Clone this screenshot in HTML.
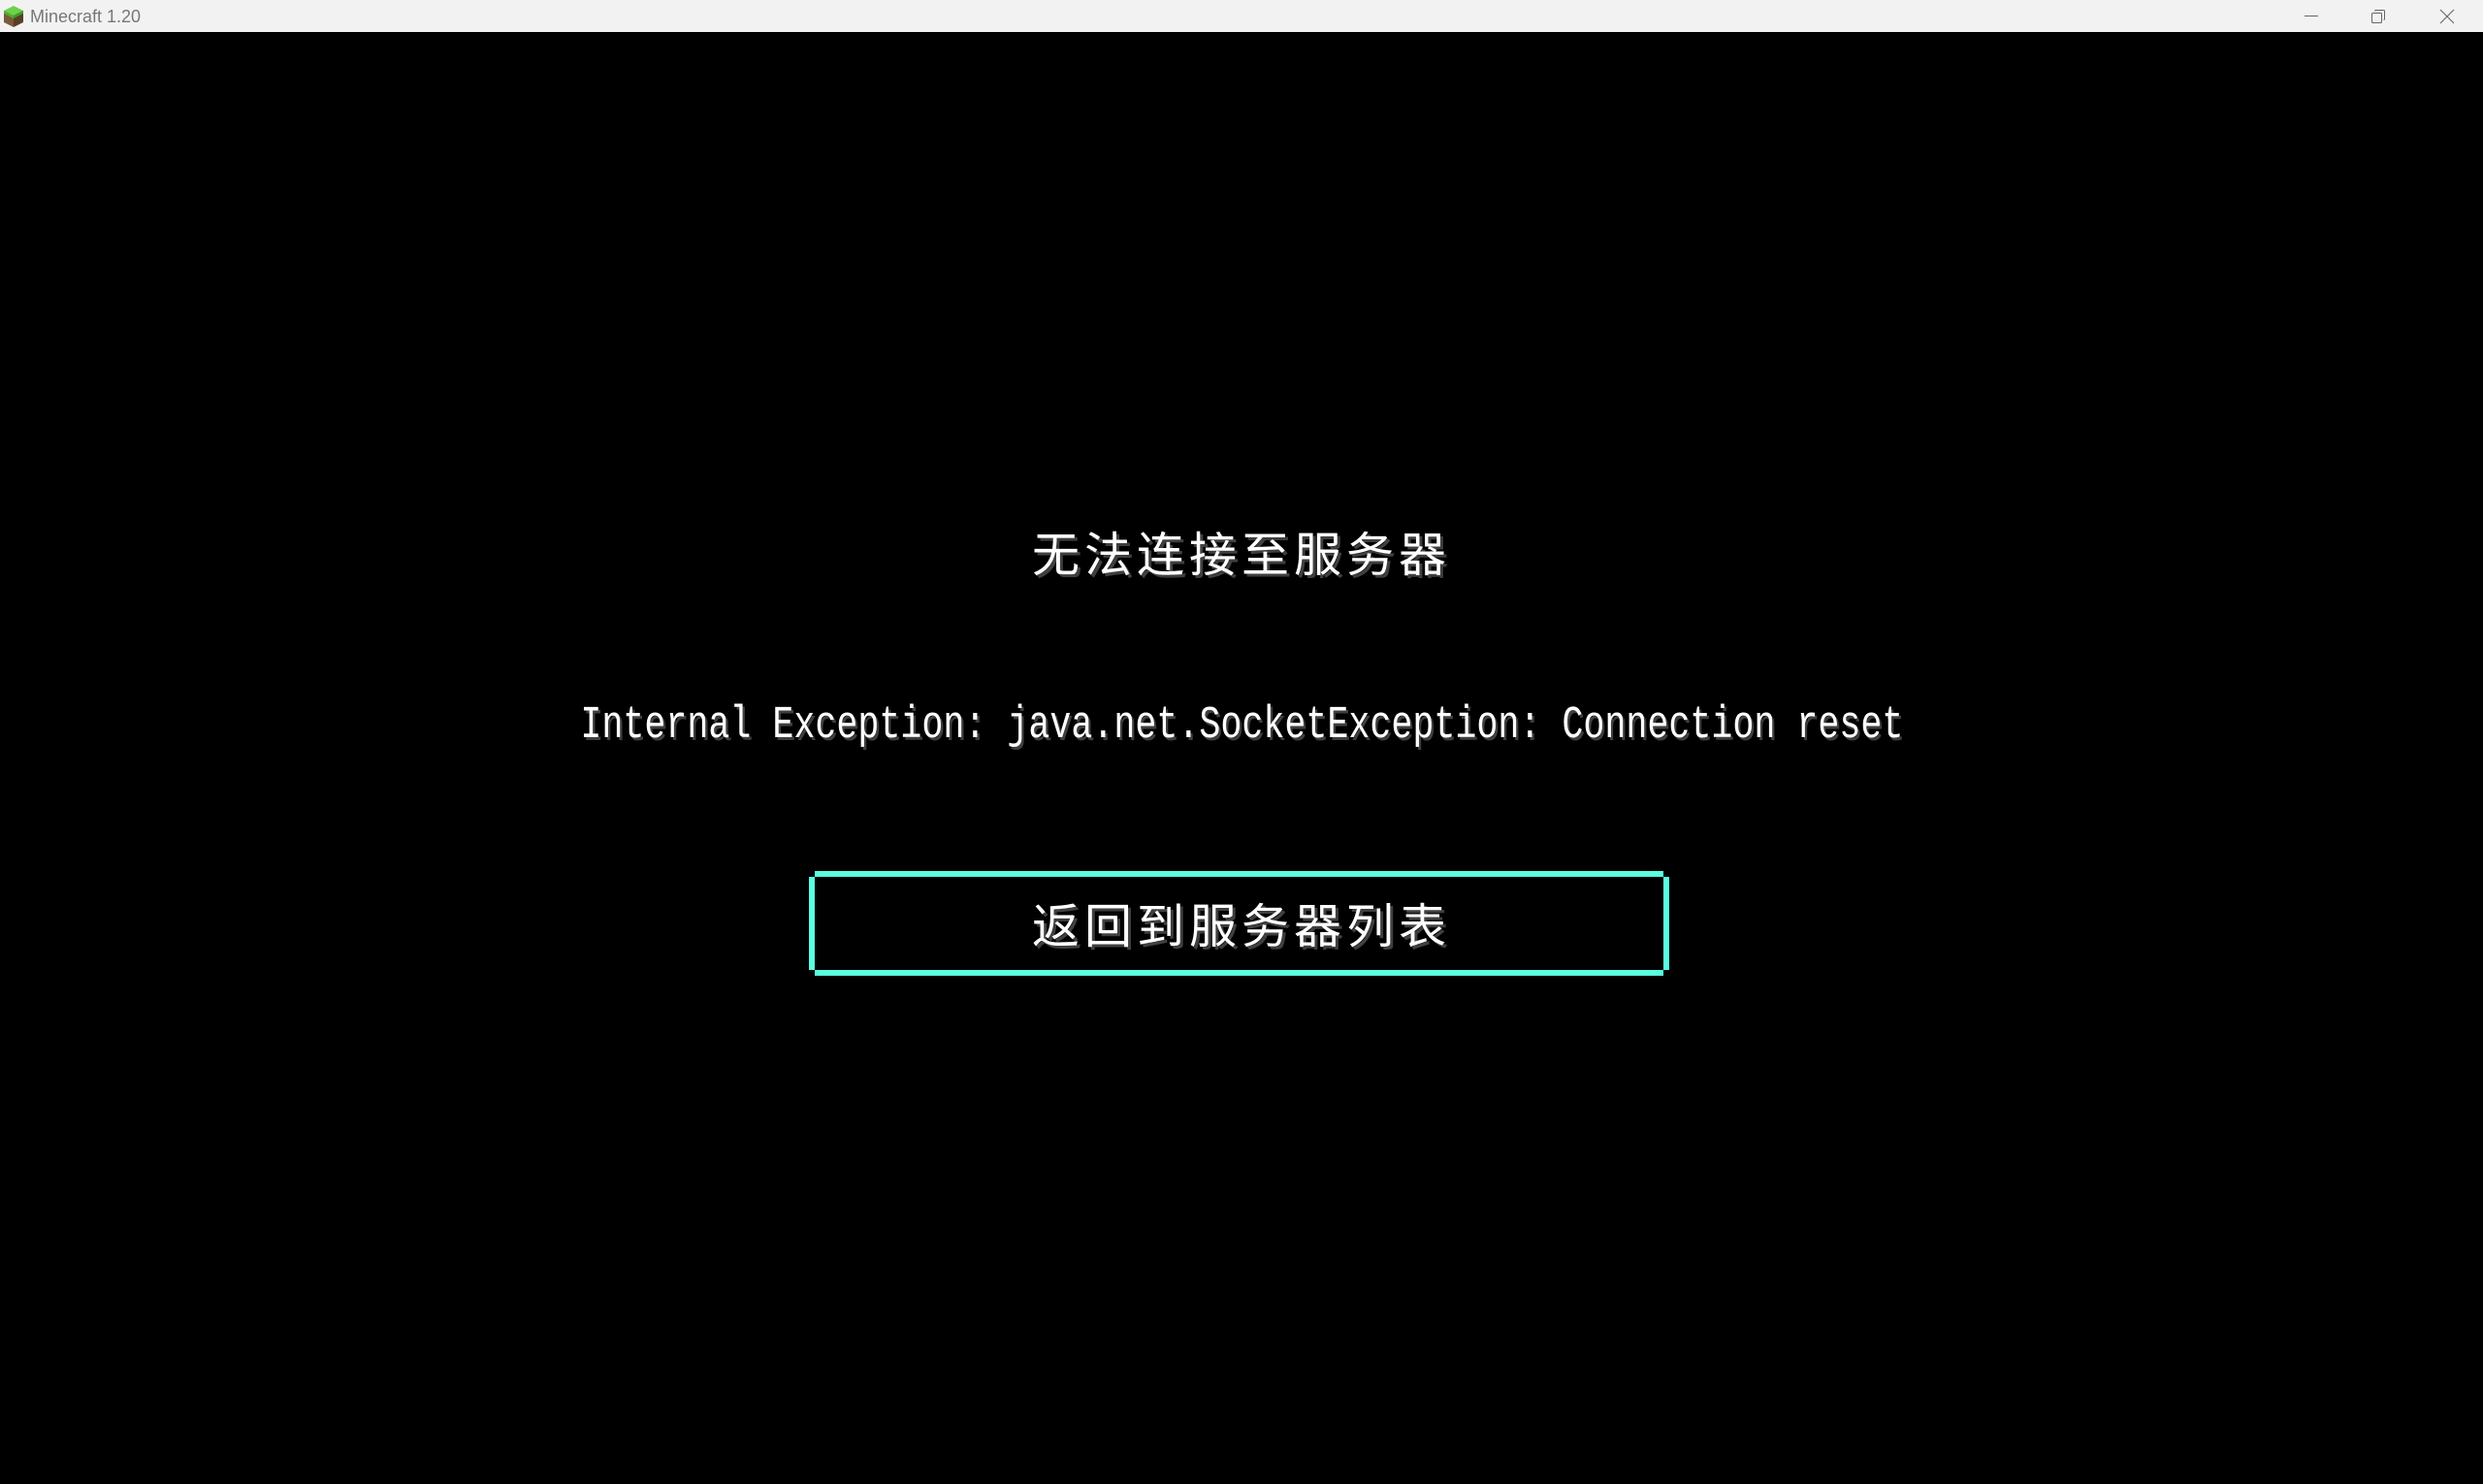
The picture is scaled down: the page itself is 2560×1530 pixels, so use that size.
<!DOCTYPE html>
<html><head><meta charset="utf-8"><style>
*{margin:0;padding:0;box-sizing:border-box}
body{width:2560px;height:1530px;background:#000;overflow:hidden;position:relative;font-family:"Liberation Sans",sans-serif}
.tb{position:absolute;left:0;top:0;width:2560px;height:33px;background:#f2f2f2}
.tb .t{position:absolute;left:31px;top:7px;font-size:18px;color:#777;font-family:"Liberation Sans",sans-serif}
.cjk{position:absolute;left:0;width:2560px;text-align:center;color:#fff;font-family:"Noto Sans CJK SC","WenQuanYi Zen Hei",sans-serif;font-size:49px;letter-spacing:5px;text-shadow:3px 3px 0 #3f3f3f;line-height:1}
.en{position:absolute;left:0;width:2560px;text-align:center;top:725px;line-height:1}
.en span{display:inline-block;font-family:"Liberation Mono",monospace;font-size:47px;color:#fff;text-shadow:3px 3px 0 #3f3f3f;transform:scaleX(0.78);white-space:pre}
.btn{position:absolute;left:834px;top:898px;width:887px;height:108px}
.btn .h{position:absolute;left:6px;right:6px;height:6px;background:#5affe0}
.btn .v{position:absolute;top:6px;bottom:6px;width:6px;background:#5affe0}
</style></head><body>
<div class="tb">
<svg style="position:absolute;left:3px;top:5px" width="22" height="24" viewBox="0 0 22 24"><polygon points="11,1 21,6 11,11 1,6" fill="#6bd24a"/><polygon points="1,6 11,11 11,23 1,18" fill="#7a5a3a"/><polygon points="21,6 11,11 11,23 21,18" fill="#5a3e26"/><polygon points="1,6 11,11 11,14 1,9" fill="#4fae35"/><polygon points="21,6 11,11 11,14 21,9" fill="#3f9a2a"/></svg>
<span class="t">Minecraft 1.20</span>
<div style="position:absolute;left:2376px;top:16px;width:14px;height:1px;background:#666"></div>
<svg style="position:absolute;left:2444px;top:9px" width="16" height="16" viewBox="0 0 16 16" fill="none" stroke="#666" stroke-width="1"><rect x="1.5" y="4.5" width="10" height="10" rx="1"/><path d="M4.5 2.5 Q4.5 1.5 5.5 1.5 H13.5 Q14.5 1.5 14.5 2.5 V10.5 Q14.5 11.5 13.5 11.5"/></svg>
<svg style="position:absolute;left:2515px;top:9px" width="16" height="16" viewBox="0 0 16 16" stroke="#666" stroke-width="1.1"><path d="M1 1 L15 15 M15 1 L1 15"/></svg>
</div>
<div class="cjk" style="top:544px">无法连接至服务器</div>
<div class="en"><span>Internal Exception: java.net.SocketException: Connection reset</span></div>
<div class="btn">
<div class="h" style="top:0"></div><div class="h" style="bottom:0"></div>
<div class="v" style="left:0"></div><div class="v" style="right:0"></div>
</div>
<div class="cjk" style="top:927px">返回到服务器列表</div>
</body></html>
